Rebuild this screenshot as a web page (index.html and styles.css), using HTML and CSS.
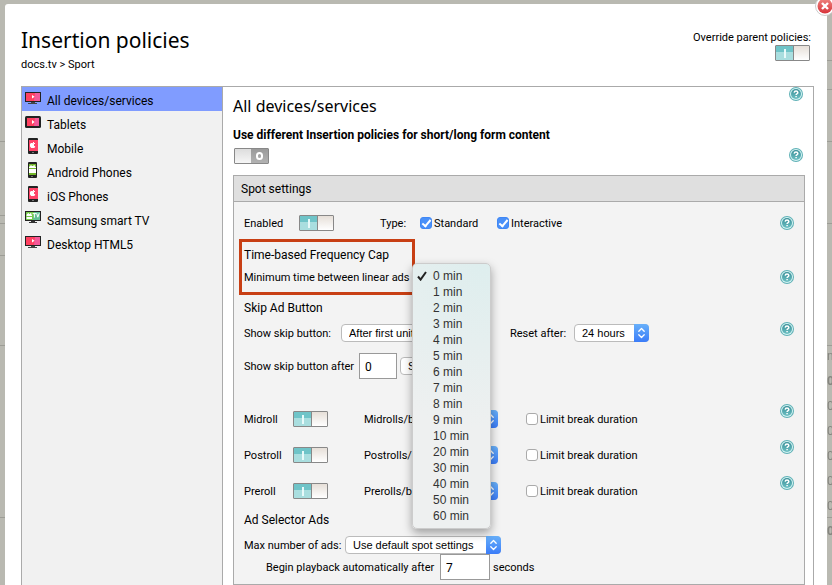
FILE: index.html
```html
<!DOCTYPE html>
<html lang="en">
<head>
<meta charset="utf-8">
<title>Insertion policies</title>
<link rel="stylesheet" href="styles.css">
</head>
<body>
<svg class="defs" aria-hidden="true">
  <defs>
    <linearGradient id="teal" x1="0" y1="0" x2="0" y2="1"><stop offset="0" stop-color="#3b8f98"/><stop offset="1" stop-color="#6cc0c3"/></linearGradient>
    <linearGradient id="red" x1="0" y1="0" x2="0" y2="1"><stop offset="0" stop-color="#ee8580"/><stop offset="1" stop-color="#d8333a"/></linearGradient>
    <symbol id="help" viewBox="0 0 14 14">
      <circle cx="7" cy="7" r="7" fill="#5fb1b6"/>
      <circle cx="7" cy="7" r="6" fill="#d5f3f3"/>
      <circle cx="7" cy="7" r="5" fill="url(#teal)"/>
      <path d="M5.2 5.6Q5.3 4 7 4T8.8 5.4Q8.8 6.3 7.8 6.8Q7.1 7.2 7.1 8M7.1 8.9V10.3" fill="none" stroke="#fff" stroke-width="1.5"/>
    </symbol>
    <symbol id="arrows" viewBox="0 0 15 18">
      <path d="M4.8 7.2L7.5 4.5L10.2 7.2M4.8 10.8L7.5 13.5L10.2 10.8" fill="none" stroke="#fff" stroke-width="1.3" stroke-linecap="round" stroke-linejoin="round"/>
    </symbol>
    <symbol id="desktop" viewBox="0 0 16 16">
      <path d="M0 1H16V11H0Z" fill="#222"/><path d="M1 2H15V10H1Z" fill="#ff4060"/><path d="M10 2H15V10H9Z" fill="#f4589a"/>
      <path d="M7 4L9.6 5.8L7 7.6Z" fill="#fff"/><path d="M6 11H10V12H6ZM3 12H12V13H3Z" fill="#444"/>
    </symbol>
    <symbol id="tablet" viewBox="0 0 16 16">
      <rect y="1" width="16" height="12" rx="1.5" fill="#222"/><path d="M2 3H14V11H2Z" fill="#ff4060"/><path d="M10 3H14V11H9Z" fill="#f4589a"/>
      <path d="M7 5L9.6 7L7 9Z" fill="#fff"/>
    </symbol>
    <symbol id="apple" viewBox="0 0 16 16">
      <rect x="3" width="10" height="16" rx="1" fill="#222"/><path d="M4 2H13V13H4Z" fill="#ff4468"/>
      <path d="M8 4H9V5H8ZM6 5H7.6L8 5.6L8.5 5H10V6H9V8H10.3L9.4 10H6.2L5 8.6V6Z" fill="#fff"/><path d="M7 14H9V15H7Z" fill="#777"/>
    </symbol>
    <symbol id="android" viewBox="0 0 16 16">
      <rect x="3" width="9" height="16" rx="1" fill="#222"/><path d="M4 2H11V13H4Z" fill="#74b82a"/>
      <path d="M4 6V5L5 4H6L5 3H6L7 4H8L9 3H10L9.4 4L11 5V6ZM4 7H11V11H4Z" fill="#fff"/><path d="M6 14H8V15H6Z" fill="#777"/>
    </symbol>
    <symbol id="smarttv" viewBox="0 0 16 16">
      <path d="M0 0H16V10H0Z" fill="#222"/><path d="M1 1H15V9H1Z" fill="#77c94b"/><path d="M9 1H15V9H8Z" fill="#62bf96"/>
      <path d="M2 3H3L2.5 2H3.5L4 3H5L5.5 2H6.5L6 3L7 4V5H1.6V4ZM1.6 6H7V8H1.6Z" fill="#fff"/><path d="M7.6 2.6H11.2M9.4 2.6V6.6M11.6 2.2L12.8 6.2L14.2 2.2" fill="none" stroke="#fff"/>
      <path d="M6 10H10V11H6ZM4 11H12V12H4Z" fill="#333"/>
    </symbol>
  </defs>
</svg>

<div class="backdrop" aria-hidden="true">
  <div class="edge edge-left"><i></i><i></i><i></i><i></i><i></i><i></i></div>
  <div class="edge edge-right">
    <i class="r1"></i><i class="r2"></i><i class="r3"></i><i class="r4"></i><i class="r5"></i><i class="r6"></i><span>n.</span><b>0</b><span>0</span><span>0</span><span>0</span><span>0</span><span>00</span><b>00</b>
  </div>
</div>

<main class="dialog">
  <button class="close" aria-label="Close"><svg viewBox="0 0 20 20"><circle cx="10" cy="10" r="9.5" fill="#fff" stroke="#ccc"/><circle cx="10" cy="10" r="7.5" fill="url(#red)"/><path d="M7 7L13 13M13 7L7 13" stroke="#fff" stroke-width="2.4"/></svg></button>
  <header class="top">
    <div>
      <h1>Insertion policies</h1>
      <p class="crumbs">docs.tv &gt; Sport</p>
    </div>
    <div class="override">
      <label for="override">Override parent policies:</label>
      <button id="override" class="toggle on" role="switch" aria-checked="true"></button>
    </div>
  </header>

  <div class="frame">
    <nav class="sidebar">
      <a class="active" href="#all"><svg><use href="#desktop"/></svg>All devices/services</a>
      <a href="#tablets"><svg><use href="#tablet"/></svg>Tablets</a>
      <a href="#mobile"><svg><use href="#apple"/></svg>Mobile</a>
      <a href="#android-phones"><svg><use href="#android"/></svg>Android Phones</a>
      <a href="#ios"><svg><use href="#apple"/></svg>iOS Phones</a>
      <a href="#samsung"><svg><use href="#smarttv"/></svg>Samsung smart TV</a>
      <a href="#html5"><svg><use href="#desktop"/></svg>Desktop HTML5</a>
    </nav>

    <section class="content">
      <div class="title-row"><h2>All devices/services</h2><button class="help" aria-label="Help"><svg><use href="#help"/></svg></button></div>
      <label class="different" for="different">Use different Insertion policies for short/long form content</label>
      <div class="switch-row"><button id="different" class="toggle off" role="switch" aria-checked="false"></button><button class="help" aria-label="Help"><svg><use href="#help"/></svg></button></div>

      <section class="panel">
        <h3>Spot settings</h3>
        <div class="row enabled">
          <label class="text enabled-label" for="enabled">Enabled</label>
          <button id="enabled" class="toggle on" role="switch" aria-checked="true"></button>
          <span class="text type">Type:</span>
          <label class="check standard"><input type="checkbox" checked>Standard</label>
          <label class="check"><input type="checkbox" checked>Interactive</label>
          <button class="help" aria-label="Help"><svg><use href="#help"/></svg></button>
        </div>

        <div class="cap">
          <h4>Time-based Frequency Cap</h4>
          <div class="row short">
            <label class="text cap-label" for="mintime">Minimum time between linear ads</label>
            <div class="open-select">
              <button id="mintime" class="menu-anchor" aria-haspopup="listbox" aria-expanded="true"></button>
              <ul class="menu" role="listbox">
                <li role="option" aria-selected="true"><svg viewBox="0 0 10 10"><path d="M1 5.5L3.6 8.6L9 1" fill="none" stroke="#222" stroke-width="2"/></svg>0 min</li>
                <li role="option">1 min</li><li role="option">2 min</li><li role="option">3 min</li><li role="option">4 min</li><li role="option">5 min</li><li role="option">6 min</li><li role="option">7 min</li><li role="option">8 min</li><li role="option">9 min</li><li role="option">10 min</li><li role="option">20 min</li><li role="option">30 min</li><li role="option">40 min</li><li role="option">50 min</li><li role="option">60 min</li>
              </ul>
            </div>
            <button class="help" aria-label="Help"><svg><use href="#help"/></svg></button>
          </div>
        </div>

        <h4 class="spaced">Skip Ad Button</h4>
        <div class="row skip">
          <label class="text skip-label" for="skip">Show skip button:</label>
          <span class="select skip-select"><select id="skip"><option>After first unit</option></select><svg><use href="#arrows"/></svg></span>
          <label class="text reset-label" for="reset">Reset after:</label>
          <span class="select"><select id="reset"><option>24 hours</option></select><svg><use href="#arrows"/></svg></span>
          <button class="help raised" aria-label="Help"><svg><use href="#help"/></svg></button>
        </div>
        <div class="row after">
          <label class="text after-label" for="after">Show skip button after</label>
          <input id="after" class="number narrow" type="text" value="0">
          <span class="select"><select aria-label="Unit"><option>Seconds</option></select><svg><use href="#arrows"/></svg></span>
        </div>

        <div class="breaks">
          <div class="row break">
            <label class="text break-label" for="mid">Midroll</label><button id="mid" class="toggle on" role="switch" aria-checked="true"></button>
            <label class="text per-break" for="mid-n">Midrolls/break:</label><span class="select break-select"><select id="mid-n"><option>1</option></select><svg><use href="#arrows"/></svg></span>
            <label class="check"><input type="checkbox">Limit break duration</label><button class="help raised" aria-label="Help"><svg><use href="#help"/></svg></button>
          </div>
          <div class="row break">
            <label class="text break-label" for="post">Postroll</label><button id="post" class="toggle on" role="switch" aria-checked="true"></button>
            <label class="text per-break" for="post-n">Postrolls/break:</label><span class="select break-select"><select id="post-n"><option>1</option></select><svg><use href="#arrows"/></svg></span>
            <label class="check"><input type="checkbox">Limit break duration</label><button class="help raised" aria-label="Help"><svg><use href="#help"/></svg></button>
          </div>
          <div class="row break">
            <label class="text break-label" for="pre">Preroll</label><button id="pre" class="toggle on" role="switch" aria-checked="true"></button>
            <label class="text per-break" for="pre-n">Prerolls/break:</label><span class="select break-select"><select id="pre-n"><option>1</option></select><svg><use href="#arrows"/></svg></span>
            <label class="check"><input type="checkbox">Limit break duration</label><button class="help raised" aria-label="Help"><svg><use href="#help"/></svg></button>
          </div>
        </div>

        <h4>Ad Selector Ads</h4>
        <div class="row skip">
          <label class="text max-label" for="max">Max number of ads:</label>
          <span class="select max-select"><select id="max"><option>Use default spot settings</option></select><svg><use href="#arrows"/></svg></span>
        </div>
        <div class="row begin">
          <label class="text begin-label" for="begin">Begin playback automatically after</label>
          <input id="begin" class="number" type="text" value="7">
          <span class="text">seconds</span>
        </div>
      </section>
    </section>
  </div>
</main>
</body>
</html>
```
FILE: styles.css
```css
*, ::before, ::after { box-sizing: border-box; }

html, body { height: 100%; overflow: hidden; }

body {
  margin: 0;
  background: #b9b9b1;
  color: #000;
  font: 11px/16px Roboto, "Liberation Sans", sans-serif;
}

h1, h2, h3, h4, p, ul { margin: 0; padding: 0; font-weight: 400; }
button, input, select { font-family: inherit; margin: 0; }
button { padding: 0; border: 0; background: none; }
svg { display: block; }
.defs { position: absolute; width: 0; height: 0; }

/* Dimmed page behind the dialog */
.backdrop { position: fixed; inset: 0; }
.edge { position: absolute; top: 0; bottom: 0; overflow: hidden; color: #85857f; }
.edge-left { left: 0; width: 5px; }
.edge-right { right: 0; width: 5px; padding-top: 344px; }
.edge i { position: absolute; left: 0; right: 0; height: 1px; background: #9d9d96; }
.edge-left i:nth-child(1) { top: 141px; }
.edge-left i:nth-child(2) { top: 215px; }
.edge-left i:nth-child(3) { top: 223px; }
.edge-left i:nth-child(4) { top: 255px; }
.edge-left i:nth-child(5) { top: 345px; }
.edge-left i:nth-child(6) { top: 517px; }
.edge-right .r1 { top: 60px; }
.edge-right .r2 { top: 89px; }
.edge-right .r3 { top: 141px; }
.edge-right .r4 { top: 223px; }
.edge-right .r5 { top: 345px; }
.edge-right .r6 { top: 517px; }
.edge span, .edge b { display: block; height: 25px; line-height: 25px; font-size: 12px; }

.dialog {
  position: relative;
  min-height: 100%;
  margin: 4px 5px 0;
  padding: 23px 13px 0 16px;
  border-radius: 3px;
  background: #fff;
}
.close { position: absolute; top: -8px; right: -8px; width: 20px; height: 20px; }

.top { display: flex; justify-content: space-between; height: 59px; }
h1 { font: 21px/26px "Noto Sans", sans-serif; }
.crumbs { line-height: 24px; }
.override { display: flex; flex-direction: column; align-items: flex-end; padding: 2px 3px 0 0; }
.override label { height: 16px; line-height: 18px; }
.override .toggle { margin-right: 1px; }

.toggle {
  flex: none;
  position: relative;
  width: 35px;
  height: 16px;
  border: 1px solid #888;
  border-radius: 1px;
}
.toggle.on { background: linear-gradient(#6fc4c8 45%, #a9dedf 46%) left / 17px 100% no-repeat, linear-gradient(#e6dfd8, #fff); }
.toggle.on::before { content: ""; position: absolute; left: 8px; top: 3px; width: 2px; height: 9px; background: #e8fafa; }
.toggle.on::after { content: ""; position: absolute; left: 17px; top: 0; width: 1px; height: 100%; background: #888; }
.toggle.off { background: linear-gradient(#9a9a9a, #b2b2b2) right / 17px 100% no-repeat, linear-gradient(#ddd, #f6f6f6); }
.toggle.off::after { content: ""; position: absolute; right: 5px; top: 3px; width: 7px; height: 8px; border: 2px solid #fff; border-radius: 4px; }

.frame { display: flex; min-height: 520px; border: 1px solid #aaa; }
.sidebar { flex: none; width: 201px; border-right: 1px solid #aaa; background: #f1f1f1; font-size: 12px; }
.sidebar a { display: flex; gap: 6px; height: 24px; padding: 4px 3px; line-height: 20px; color: #000; text-decoration: none; }
.sidebar svg { width: 16px; height: 16px; }
.sidebar a:nth-child(n+3):nth-child(-n+5) svg { margin-top: -1px; }
.sidebar .active { background: #809cff; }

.content { flex: 1; min-width: 0; padding: 0 8px 0 10px; }
.title-row, .switch-row { display: flex; justify-content: space-between; align-items: flex-start; }
h2 { font: 16px/38px "Noto Sans", sans-serif; }
.title-row { height: 37px; }
.different { display: block; font-size: 12px; font-weight: 700; line-height: 22px; }
.switch-row { height: 29px; padding: 2px 0 0 1px; }
.help { flex: none; width: 14px; height: 14px; margin-left: auto; }
.title-row .help, .switch-row .help { margin-right: 2px; }
.help svg { width: 14px; height: 14px; }
.help.raised { align-self: flex-start; margin-top: 3px; }

.panel { border: 1px solid #aaa; background: #f3f3f3; padding-bottom: 4px; }
h3 { padding: 0 7px; border-bottom: 1px solid #aaa; background: #dfdfdf; font-size: 12px; line-height: 26px; height: 26px; }
h4 { padding: 0 10px; font-size: 12px; line-height: 22px; }
h4.spaced { margin-top: 9px; }
.row { display: flex; align-items: center; padding: 0 10px; height: 28px; }
.row.enabled { height: 42px; }
.row.short { height: 22px; }
.row.after { height: 38px; }
.row.break { height: 36px; }
.breaks { margin-top: 16px; }
.row.begin { height: 26px; margin-top: -5px; padding-left: 32px; }

.text { flex: none; padding-top: 2px; }
.enabled-label { width: 55px; }
.type { width: 40px; margin-left: 46px; }
.check { display: flex; align-items: center; gap: 2px; padding-top: 2px; }
.check.standard { width: 77px; }
.check input {
  appearance: none;
  position: relative;
  width: 12px;
  height: 12px;
  margin-bottom: 2px;
  border: 1px solid #aaa;
  border-radius: 3px;
  background: #fff;
}
.check input:checked { border-color: #3f87f5; background: #4a90f8; }
.check input:checked::after {
  content: "";
  position: absolute;
  left: 3px;
  top: 0;
  width: 5px;
  height: 9px;
  border: solid #fff;
  border-width: 0 2px 2px 0;
  transform: rotate(40deg);
}

/* Highlighted group */
.cap { position: relative; }
.cap::before { content: ""; position: absolute; left: 5px; top: -5px; width: 176px; height: 56px; border: 3px solid #c83f14; }
.cap-label { width: 168px; }

.open-select { position: relative; width: 78px; height: 18px; }
.menu-anchor { width: 78px; height: 18px; }
.menu {
  position: absolute;
  z-index: 2;
  top: -5px;
  left: 0;
  width: 79px;
  padding: 4px 0;
  border: 1px solid #ccc;
  border-radius: 5px;
  background: radial-gradient(circle at 90% 0, #deeeee, #eef0f0 60%);
  box-shadow: 0 4px 10px rgba(0, 0, 0, .35);
  color: #333;
  font: 12px/16px "Liberation Sans", sans-serif;
  list-style: none;
}
.menu li { position: relative; padding-left: 20px; }
.menu svg { position: absolute; left: 4px; top: 3px; width: 10px; height: 10px; }

.select { position: relative; display: block; }
.select select {
  appearance: none;
  display: block;
  width: 100%;
  height: 18px;
  padding: 0 23px 0 7px;
  border: 1px solid #bbb;
  border-radius: 4px;
  background: #fff;
  color: #000;
  font: 11px/16px "Liberation Sans", sans-serif;
}
.select svg {
  position: absolute;
  top: 0;
  right: 0;
  width: 15px;
  height: 18px;
  border-radius: 0 4px 4px 0;
  background: linear-gradient(#68b0fa, #3b7cf8);
  pointer-events: none;
}
.skip-label { width: 97px; }
.skip-select { width: 145px; }
.reset-label { width: 64px; margin-left: 24px; }
.after-label { width: 115px; }
.after .select { margin-left: 3px; }
.break-label { width: 49px; }
.per-break { width: 84px; margin-left: 36px; }
.break-select { width: 50px; margin-right: 28px; }
.max-label { width: 101px; }
.max-select { width: 156px; }
.begin-label { width: 174px; }
.number { width: 50px; height: 26px; margin-right: 3px; padding: 2px 5px 0; border: 1px solid #999; background: #fff; font-size: 12px; }
.number.narrow { width: 38px; margin-right: 0; }
```
